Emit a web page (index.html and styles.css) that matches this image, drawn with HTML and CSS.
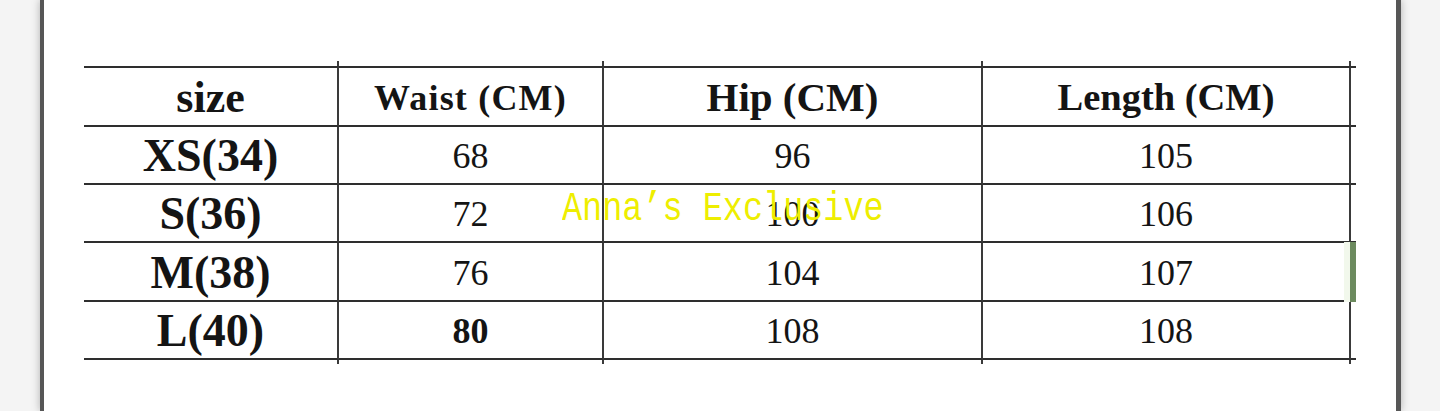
FILE: index.html
```html
<!DOCTYPE html>
<html lang="en">
<head>
<meta charset="utf-8">
<title>Size chart</title>
<link rel="stylesheet" href="styles.css">
</head>
<body>
<div class="page">
  <div class="sheet">
    <div class="chart">
      <div class="sp"></div><div class="sp"></div><div class="sp"></div><div class="sp"></div><div class="sp last"></div>

      <div class="c h first"><span class="t-size">size</span></div>
      <div class="c h"><span class="t-waist">Waist (CM)</span></div>
      <div class="c h"><span class="t-hip">Hip (CM)</span></div>
      <div class="c h"><span class="t-len">Length (CM)</span></div>
      <div class="c h last"></div>

      <div class="c r1 lbl">XS(34)</div>
      <div class="c r1 num">68</div>
      <div class="c r1 num">96</div>
      <div class="c r1 num">105</div>
      <div class="c r1 last"></div>

      <div class="c r2 lbl">S(36)</div>
      <div class="c r2 num">72</div>
      <div class="c r2 num">100</div>
      <div class="c r2 num">106</div>
      <div class="c r2 last"></div>

      <div class="c r3 lbl">M(38)</div>
      <div class="c r3 num">76</div>
      <div class="c r3 num">104</div>
      <div class="c r3 num sel">107</div>
      <div class="c r3 last"></div>

      <div class="c r4 lbl">L(40)</div>
      <div class="c r4 num bold">80</div>
      <div class="c r4 num">108</div>
      <div class="c r4 num">108</div>
      <div class="c r4 last"></div>

      <div class="sp b"></div><div class="sp b"></div><div class="sp b"></div><div class="sp b"></div><div class="sp b last"></div>
    </div>
    <div class="mark">Anna’s Exclusive</div>
  </div>
</div>
</body>
</html>
```

FILE: styles.css
```css
* { box-sizing: border-box; }
html, body { margin: 0; padding: 0; }
body {
  background: #f4f4f4;
  width: 1440px;
  height: 411px;
  overflow: hidden;
}
.page {
  display: flex;
  height: 411px;
  padding-left: 40px;
}
.sheet {
  position: relative;
  width: 1361px;
  height: 411px;
  background: #ffffff;
  border-left: 4px solid #565656;
  border-right: 5px solid #565656;
  box-shadow: 0 0 8px rgba(0,0,0,0.28);
  padding-left: 40px;
  padding-top: 61px;
}
.chart {
  display: grid;
  grid-template-columns: 255px 265px 379px 368px 5px;
  grid-template-rows: 5px 61px 58px 58px 59px 58px 4px;
  font-family: "Liberation Serif", "Times New Roman", serif;
  color: #141414;
}
.sp { border-right: 2px solid #3a3a3a; }
.sp.last { border-right: 0; }
.c {
  display: flex;
  align-items: center;
  justify-content: center;
  border-bottom: 2px solid #2e2e2e;
  border-right: 2px solid #3a3a3a;
  line-height: 1;
}
.c.last { border-right: 0; }
.c.h { border-top: 2px solid #2e2e2e; font-weight: bold; padding-top: 2px; }
.t-size { font-size: 44px; }
.t-waist { font-size: 36px; letter-spacing: 1.2px; }
.t-hip { font-size: 41px; }
.t-len { font-size: 38.5px; }
.lbl { font-size: 46px; font-weight: bold; padding-top: 2px; }
.num { font-size: 36px; padding-top: 2px; }
.num.bold { font-weight: bold; }
.sel { position: relative; }
.sel::after {
  content: "";
  position: absolute;
  top: -1px;
  bottom: -2px;
  right: -7px;
  width: 6px;
  background: #6c8a5e;
  box-shadow: -6px 0 0 #f2f8ec;
}
.mark {
  position: absolute;
  left: 518px;
  top: 190px;
  font-family: "Liberation Mono", "DejaVu Sans Mono", monospace;
  font-size: 33.5px;
  color: #eeee00;
  white-space: pre;
  line-height: 1;
  transform: scaleY(1.2);
  transform-origin: left top;
}
```
